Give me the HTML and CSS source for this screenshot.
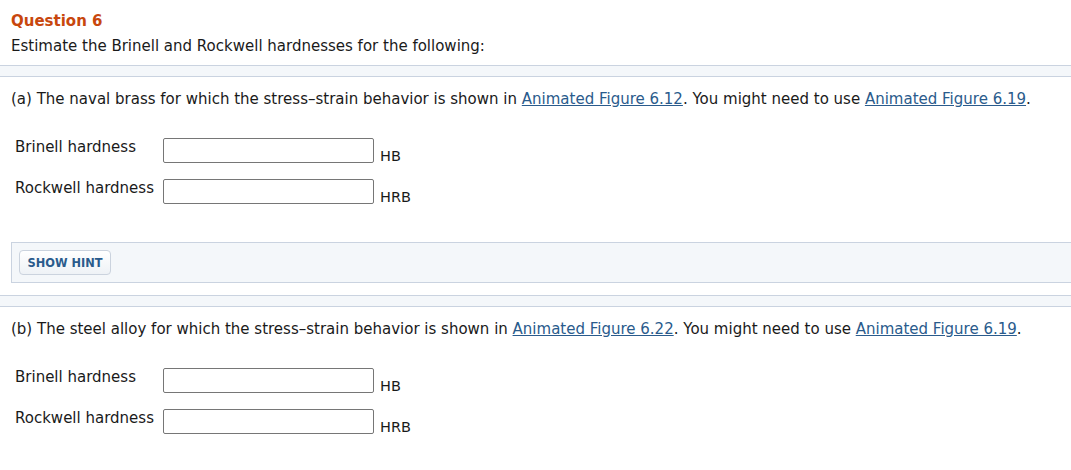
FILE: index.html
```html
<!DOCTYPE html>
<html>
<head>
<meta charset="utf-8">
<link rel="stylesheet" href="styles.css">
</head>
<body>
<div class="header">
  <h2 class="title">Question 6</h2>
  <p class="intro">Estimate the Brinell and Rockwell hardnesses for the following:</p>
</div>
<div class="sep"></div>
<div class="part">
  <p class="prompt">(a) The naval brass for which the stress–strain behavior is shown in <a href="#">Animated Figure 6.12</a>. You might need to use <a href="#">Animated Figure 6.19</a>.</p>
  <div class="rows">
    <div class="row"><span class="label">Brinell hardness</span><input class="field" type="text"><span class="unit">HB</span></div>
    <div class="row"><span class="label">Rockwell hardness</span><input class="field" type="text"><span class="unit">HRB</span></div>
  </div>
</div>
<div class="hint"><button class="hint-btn">SHOW HINT</button></div>
<div class="sep sep2"></div>
<div class="part">
  <p class="prompt">(b) The steel alloy for which the stress–strain behavior is shown in <a href="#">Animated Figure 6.22</a>. You might need to use <a href="#">Animated Figure 6.19</a>.</p>
  <div class="rows">
    <div class="row"><span class="label">Brinell hardness</span><input class="field" type="text"><span class="unit">HB</span></div>
    <div class="row"><span class="label">Rockwell hardness</span><input class="field" type="text"><span class="unit">HRB</span></div>
  </div>
</div>
</body>
</html>
```
FILE: styles.css
```css
* { box-sizing: border-box; }
body {
  margin: 0;
  padding-bottom: 30px;
  background: #fff;
  color: #1a1a1a;
  font-family: "DejaVu Sans", Verdana, sans-serif;
  font-size: 15px;
}
.header { padding: 11px 11px 0; height: 65px; }
.title {
  margin: 0;
  font-size: 15px;
  font-weight: bold;
  color: #c8470d;
  line-height: 20px;
}
.intro { margin: 5px 0 0; line-height: 20px; }
.sep {
  height: 12px;
  background: #f4f7fa;
  border-top: 1px solid #cad3e0;
  border-bottom: 1px solid #cad3e0;
}
.part { padding: 0 0 0 11px; }
.prompt { margin: 0; padding-top: 12px; line-height: 20px; }
.prompt a { color: #2a5b8c; }
.rows { padding: 29px 0 0 4px; display: flex; flex-direction: column; gap: 17px; }
.row { display: flex; align-items: flex-start; height: 24px; }
.label { width: 148px; line-height: 18px; }
.field {
  flex: none;
  width: 211px;
  height: 25px;
  border: 1px solid #767676;
  border-radius: 2px;
  margin: 0;
  padding: 0;
  font: inherit;
  background: #fff;
}
.unit { margin-left: 6px; align-self: flex-end; line-height: 15px; font-size: 14.5px; margin-bottom: -2px; }
.hint {
  margin: 39px 0 0 11px;
  height: 41px;
  background: #f4f7fa;
  border: 1px solid #cad3e0;
  border-right: none;
  padding: 7px 7px;
}
.hint-btn {
  display: block;
  height: 25px;
  width: 92px;
  padding: 0;
  font-family: "DejaVu Sans", Verdana, sans-serif;
  font-size: 11.4px;
  font-weight: bold;
  color: #2a5b8c;
  background: linear-gradient(#ffffff, #eef2f6);
  border: 1px solid #cbd3de;
  border-radius: 4px;
}
.sep2 { margin-top: 12px; }
```
